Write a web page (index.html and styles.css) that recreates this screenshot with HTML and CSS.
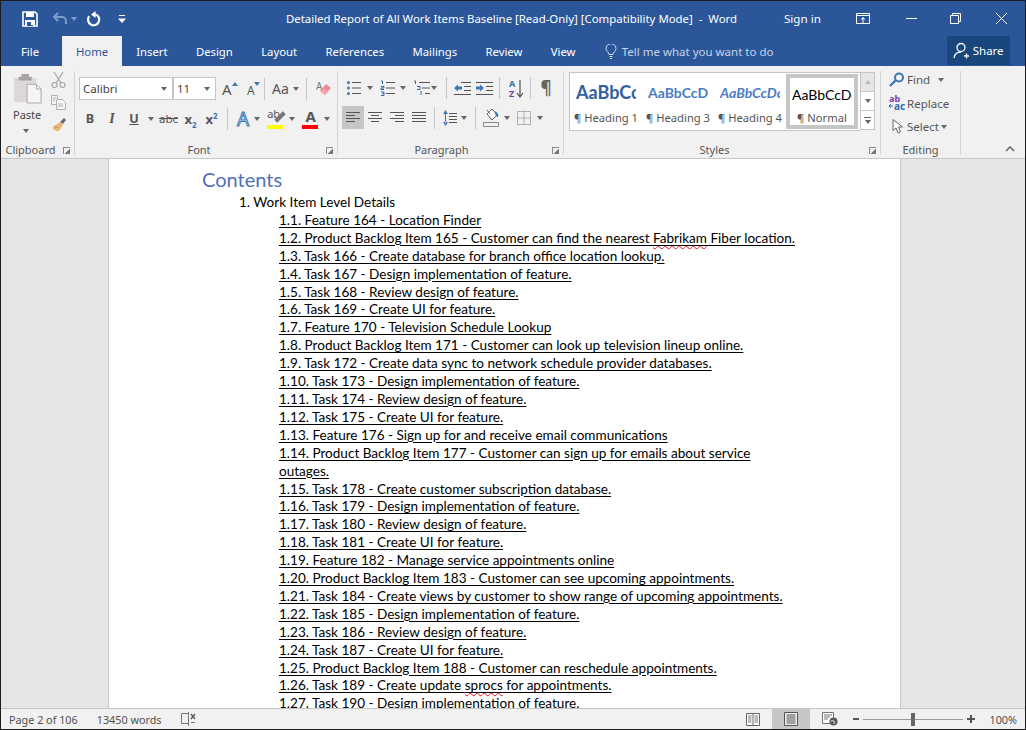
FILE: index.html
```html
<!DOCTYPE html>
<html lang="en">
<head>
    <meta charset="UTF-8">
    <title>Detailed Report of All Work Items Baseline [Read-Only] [Compatibility Mode] - Word</title>
    <link rel="stylesheet" href="styles.css">
</head>
<body>
<div class="window">

    <!-- Title bar -->
    <header class="titlebar">
        <div class="qat">
            <svg class="q-save" width="16" height="16" viewBox="0 0 16 16"><path d="M1 1h12l2 2v12H1z" fill="none" stroke="#fff" stroke-width="1.600"/><path d="M4 1h8v5H4zM3 9h10v6H3z" fill="#fff"/><path d="M5 11h6v4H5z" fill="#2b579a"/><path d="M9 11h2v3H9z" fill="#fff"/></svg>
            <svg class="q-undo" width="16" height="14" viewBox="0 0 16 14"><path d="M6 1L2 5l4 4M2 5h8a4 4 0 0 1 4 4v3" fill="none" stroke="#7f9cc6" stroke-width="2"/></svg>
            <span class="caret caret-dim"></span>
            <svg class="q-redo" width="15" height="16" viewBox="0 0 15 16"><path d="M9 3.200a5.600 5.600 0 1 1-5.800 2" fill="none" stroke="#fff" stroke-width="2.200"/><path d="M9.500 0v7L5 3.500z" fill="#fff"/></svg>
            <svg class="q-more" width="8" height="8" viewBox="0 0 8 8"><path d="M1 .5h6" stroke="#fff"/><path d="M0 3.500h8L4 8z" fill="#fff"/></svg>
        </div>
        <div class="doc-title">Detailed Report of All Work Items Baseline [Read-Only] [Compatibility Mode]&nbsp; -&nbsp; Word</div>
        <div class="sign-in">Sign in</div>
        <div class="win-buttons">
            <svg class="w-display" width="14" height="11" viewBox="0 0 14 11"><path d="M.5.500h13v10H.5zM.5 2.500h13" fill="none" stroke="#fff"/><path d="M7 4L4.500 6.500h5zM6.500 6h1v4h-1z" fill="#fff"/></svg>
            <svg class="w-min" width="11" height="11" viewBox="0 0 11 11"><path d="M0 5.500h11" stroke="#fff"/></svg>
            <svg class="w-max" width="11" height="11" viewBox="0 0 11 11"><path d="M.5 2.500h8v8h-8zM2.500 2.500v-2h8v8h-2" fill="none" stroke="#fff"/></svg>
            <svg class="w-close" width="11" height="11" viewBox="0 0 11 11"><path d="M0 0l11 11M11 0L0 11" stroke="#fff"/></svg>
        </div>
    </header>

    <!-- Tabs -->
    <nav class="tabs">
        <span class="tab tab-file">File</span>
        <span class="tab tab-active">Home</span>
        <span class="tab">Insert</span>
        <span class="tab">Design</span>
        <span class="tab">Layout</span>
        <span class="tab">References</span>
        <span class="tab">Mailings</span>
        <span class="tab">Review</span>
        <span class="tab">View</span>
        <span class="tell-me">
            <svg width="12" height="15" viewBox="0 0 12 15"><path d="M4 10.500C4 8 1 7.500 1 4.700a5 5 0 0 1 10 0C11 7.500 8 8 8 10.500zM4.500 12.500h3M5 14.500h2" fill="none" stroke="#d5dfee"/></svg>
            Tell me what you want to do
        </span>
        <span class="share">
            <svg width="17" height="17" viewBox="0 0 17 17"><circle cx="8" cy="5.500" r="4" fill="none" stroke="#fff" stroke-width="1.300"/><path d="M1 16c.5-3.500 3-6 7-6M11 14h5M13.500 11.500v5" fill="none" stroke="#fff" stroke-width="1.300"/></svg>
            Share
        </span>
    </nav>

    <!-- Ribbon -->
    <section class="ribbon">

        <div class="group g-clipboard">
            <div class="group-body clip-body">
                <div class="paste">
                    <svg width="28" height="30" viewBox="0 0 30 32"><path d="M0 4h24v26H0z" fill="#dcd8d8"/><path d="M8 0h8v3h3v4H5V3h3z" fill="#a9a4a4"/><path d="M14 11h10l5 5v15H14z" fill="#f6f4f4" stroke="#a9a4a4"/><path d="M24 11v5h5" fill="none" stroke="#a9a4a4"/></svg>
                    <span class="paste-label">Paste</span>
                    <span class="caret"></span>
                </div>
                <div class="clip-tools">
                    <svg width="15" height="16" viewBox="0 0 15 16"><path d="M3 0l7 11M12 0L5 11" stroke="#a8a8a8" stroke-width="1.200" fill="none"/><circle cx="3.500" cy="13" r="2.500" fill="none" stroke="#a8a8a8" stroke-width="1.200"/><circle cx="11.500" cy="13" r="2.500" fill="none" stroke="#a8a8a8" stroke-width="1.200"/></svg>
                    <svg width="15" height="15" viewBox="0 0 15 15"><path d="M.5.500h6v9h-6z" fill="none" stroke="#b0b0b0"/><path d="M5.500 4.500h6l3 3v7h-9z" fill="#f6f6f6" stroke="#b0b0b0"/><path d="M2 3h3M2 5h2M7 9h5M7 11h5" stroke="#b0b0b0"/></svg>
                    <svg width="16" height="15" viewBox="0 0 16 15"><path d="M9 5l3 3-4 6H5L1 11z" fill="#eab676"/><path d="M9 5l4-4 2 2-3 4z" fill="#6a6a6a"/><path d="M3 9l4 2" stroke="#c08c4c"/></svg>
                </div>
            </div>
            <div class="group-label">Clipboard<i class="launcher"></i></div>
        </div>

        <div class="group g-font">
            <div class="group-body">
                <div class="row font-row1">
                    <span class="combo combo-font">Calibri<span class="caret"></span></span>
                    <span class="combo combo-size">11<span class="caret"></span></span>
                    <span class="t-glyph t-grow">A<i class="mini-up"></i></span>
                    <span class="t-glyph t-shrink">A<i class="mini-down"></i></span>
                    <i class="sep"></i>
                    <span class="t-glyph t-case">Aa<span class="caret"></span></span>
                    <i class="sep"></i>
                    <svg class="t-clear" width="16" height="16" viewBox="0 0 16 16"><path d="M10 3l5 4-6 7-5-4z" fill="#ec8b98"/><path d="M4 10l3-3 5 4-3 3z" fill="#f3a6b0"/><text x="0" y="9" font-size="10" font-family="Noto Sans" fill="#777">A</text></svg>
                </div>
                <div class="row font-row2">
                    <span class="t-text t-b">B</span>
                    <span class="t-text t-i">I</span>
                    <span class="t-text t-u">U</span>
                    <span class="caret c-u"></span>
                    <span class="t-text t-abc">abc</span>
                    <span class="t-text t-x">x<sub>2</sub></span>
                    <span class="t-text t-x">x<sup>2</sup></span>
                    <i class="sep sep-font"></i>
                    <span class="t-effect">A</span>
                    <span class="caret c-e"></span>
                    <span class="t-mark"><span class="mark-text">ab</span><i class="mark-pen"></i><i class="swatch sw-yellow"></i></span>
                    <span class="caret c-e"></span>
                    <span class="t-color">A<i class="swatch sw-red"></i></span>
                    <span class="caret c-e"></span>
                </div>
            </div>
            <div class="group-label">Font<i class="launcher"></i></div>
        </div>

        <div class="group g-para">
            <div class="group-body">
                <div class="row para-row1">
                    <svg class="p-bul" width="14" height="16" viewBox="0 0 14 16"><path d="M5 2.500h9M5 8h9M5 13.500h9" stroke="#555"/><circle cx="1.500" cy="2.500" r="1.500" fill="#3f78b8"/><circle cx="1.500" cy="8" r="1.500" fill="#3f78b8"/><circle cx="1.500" cy="13.500" r="1.500" fill="#3f78b8"/></svg>
                    <span class="caret c-p"></span>
                    <svg class="p-num" width="15" height="16" viewBox="0 0 15 16"><path d="M6 2.500h9M6 8h9M6 13.500h9" stroke="#555"/><path d="M1 1h1.500v3M1 6.500h3v1.500H1v1.500h3M1 12h3v3.500H1M2 13.700h2" stroke="#2e6db0" fill="none"/></svg>
                    <span class="caret c-p"></span>
                    <svg class="p-multi" width="17" height="16" viewBox="0 0 17 16"><path d="M6 2.500h11M9 8h8M12 13.500h5" stroke="#555"/><path d="M1 1h1.500v3M4 6.500h3v3H4M8 11v4" stroke="#2e6db0" fill="none"/></svg>
                    <span class="caret c-m"></span>
                    <i class="sep sep-p1"></i>
                    <svg class="p-ind" width="17" height="14" viewBox="0 0 17 14"><path d="M7 1.500h10M10 5.500h7M10 9.500h7M0 13.500h17" stroke="#555"/><path d="M0 7l4-3.500v2h4v3H4v2z" fill="#3f78b8"/></svg>
                    <svg class="p-ind" width="17" height="14" viewBox="0 0 17 14"><path d="M0 1.500h17M10 5.500h7M10 9.500h7M0 13.500h17" stroke="#555"/><path d="M8 7L4 3.500v2H0v3h4v2z" fill="#3f78b8"/></svg>
                    <i class="sep sep-p2"></i>
                    <svg class="p-sort" width="14" height="19" viewBox="0 0 14 19"><text x="0" y="8" font-size="9" font-weight="700" font-family="Noto Sans" fill="#2e6db0">A</text><text x="0" y="18" font-size="9" font-weight="700" font-family="Noto Sans" fill="#7a3fa8">Z</text><path d="M11 1v16M8 14l3 4 3-4" fill="none" stroke="#555" stroke-width="1.200"/></svg>
                    <i class="sep sep-p3"></i>
                    <span class="p-pilcrow">¶</span>
                </div>
                <div class="row para-row2">
                    <span class="align align-on"><svg width="14" height="11" viewBox="0 0 14 11"><path d="M0 .5h14M0 3.500h9M0 6.500h14M0 9.500h9" stroke="#555"/></svg></span>
                    <span class="align"><svg width="14" height="11" viewBox="0 0 14 11"><path d="M0 .5h14M3 3.500h8M0 6.500h14M3 9.500h8" stroke="#555"/></svg></span>
                    <span class="align"><svg width="14" height="11" viewBox="0 0 14 11"><path d="M0 .5h14M5 3.500h9M0 6.500h14M5 9.500h9" stroke="#555"/></svg></span>
                    <span class="align"><svg width="14" height="11" viewBox="0 0 14 11"><path d="M0 .5h14M0 3.500h14M0 6.500h14M0 9.500h14" stroke="#555"/></svg></span>
                    <i class="sep sep-p4"></i>
                    <svg class="p-space" width="14" height="16" viewBox="0 0 14 16"><path d="M6 3.500h8M6 6.500h8M6 9.500h8M6 12.500h8" stroke="#555"/><path d="M0 4l2.500-4L5 4zM0 12l2.500 4L5 12zM2 3h1v10H2z" fill="#3f78b8"/></svg>
                    <span class="caret c-s"></span>
                    <i class="sep sep-p5"></i>
                    <svg class="p-shade" width="16" height="18" viewBox="0 0 16 18"><path d="M4 5l5-5 5 6-5 5z" fill="#fff" stroke="#666"/><path d="M4 1l3 4" stroke="#666"/><path d="M12 2c3 2 4 4 3 6-2 0-3-2-3-6z" fill="#3f78b8"/><path d="M.5 13.500h15v4H.5z" fill="#f1f1f1" stroke="#888"/></svg>
                    <span class="caret c-b"></span>
                    <svg class="p-border" width="14" height="14" viewBox="0 0 14 14"><path d="M.5.500h13v13H.5zM7 .5v13M.5 7h13" fill="none" stroke="#777" stroke-dasharray="1 1"/></svg>
                    <span class="caret c-b2"></span>
                </div>
            </div>
            <div class="group-label">Paragraph<i class="launcher"></i></div>
        </div>

        <div class="group g-styles">
            <div class="group-body gallery-wrap">
                <div class="gallery">
                    <div class="style-item"><span class="s-sample s-h1">AaBbCc</span><span class="s-name">¶ Heading 1</span></div>
                    <div class="style-item"><span class="s-sample s-h3">AaBbCcDc</span><span class="s-name">¶ Heading 3</span></div>
                    <div class="style-item"><span class="s-sample s-h4">AaBbCcDc</span><span class="s-name">¶ Heading 4</span></div>
                    <div class="style-item style-on"><span class="s-sample s-normal">AaBbCcDc</span><span class="s-name">¶ Normal</span></div>
                </div>
                <div class="gallery-scroll">
                    <span class="g-btn g-btn-off"><i class="up"></i></span>
                    <span class="g-btn"><i class="caret"></i></span>
                    <span class="g-btn g-btn-more"><i class="caret"></i></span>
                </div>
            </div>
            <div class="group-label">Styles<i class="launcher"></i></div>
        </div>

        <div class="group g-edit">
            <div class="group-body edit-body">
                <div class="edit-row">
                    <svg width="16" height="15" viewBox="0 0 16 15"><circle cx="10" cy="5.500" r="4" fill="none" stroke="#3f78b8" stroke-width="2"/><path d="M7 8l-6 6" stroke="#3f78b8" stroke-width="2.400"/></svg>
                    Find<span class="caret c-find"></span>
                </div>
                <div class="edit-row">
                    <svg class="abac" width="17" height="16" viewBox="0 0 17 16"><text x="0" y="7" font-size="9" font-weight="700" font-family="Noto Sans" fill="#7a3fa8">ab</text><text x="5" y="15" font-size="10" font-weight="700" font-family="Noto Sans" fill="#2e6db0">ac</text><path d="M0 11h4M2 9l-2 2 2 2" fill="none" stroke="#2e6db0"/></svg>
                    Replace
                </div>
                <div class="edit-row edit-select">
                    <svg width="12" height="15" viewBox="0 0 12 15"><path d="M1 .5v11l3-2.500 2 5 2.500-1-2-5h4z" fill="#fff" stroke="#666"/></svg>
                    Select<span class="caret"></span>
                </div>
            </div>
            <div class="group-label group-label-plain">Editing</div>
        </div>

        <div class="collapse"><svg width="10" height="6" viewBox="0 0 10 6"><path d="M1 5l4-4 4 4" fill="none" stroke="#666" stroke-width="1.500"/></svg></div>
    </section>

    <!-- Document -->
    <main class="workspace">
        <div class="page">
            <h1 class="contents-title">Contents</h1>
            <p class="lvl1">1. Work Item Level Details</p>
            <ul class="toc">
                <li><u>1.1. Feature 164 - Location Finder</u></li>
                <li><u>1.2. Product Backlog Item 165 - Customer can find the nearest <span class="spell">Fabrikam</span> Fiber location.</u></li>
                <li><u>1.3. Task 166 - Create database for branch office location lookup.</u></li>
                <li><u>1.4. Task 167 - Design implementation of feature.</u></li>
                <li><u>1.5. Task 168 - Review design of feature.</u></li>
                <li><u>1.6. Task 169 - Create UI for feature.</u></li>
                <li><u>1.7. Feature 170 - Television Schedule Lookup</u></li>
                <li><u>1.8. Product Backlog Item 171 - Customer can look up television lineup online.</u></li>
                <li><u>1.9. Task 172 - Create data sync to network schedule provider databases.</u></li>
                <li><u>1.10. Task 173 - Design implementation of feature.</u></li>
                <li><u>1.11. Task 174 - Review design of feature.</u></li>
                <li><u>1.12. Task 175 - Create UI for feature.</u></li>
                <li><u>1.13. Feature 176 - Sign up for and receive email communications</u></li>
                <li><u>1.14. Product Backlog Item 177 - Customer can sign up for emails about service outages.</u></li>
                <li><u>1.15. Task 178 - Create customer subscription database.</u></li>
                <li><u>1.16. Task 179 - Design implementation of feature.</u></li>
                <li><u>1.17. Task 180 - Review design of feature.</u></li>
                <li><u>1.18. Task 181 - Create UI for feature.</u></li>
                <li><u>1.19. Feature 182 - Manage service appointments online</u></li>
                <li><u>1.20. Product Backlog Item 183 - Customer can see upcoming appointments.</u></li>
                <li><u>1.21. Task 184 - Create views by customer to show range of upcoming appointments.</u></li>
                <li><u>1.22. Task 185 - Design implementation of feature.</u></li>
                <li><u>1.23. Task 186 - Review design of feature.</u></li>
                <li><u>1.24. Task 187 - Create UI for feature.</u></li>
                <li><u>1.25. Product Backlog Item 188 - Customer can reschedule appointments.</u></li>
                <li><u>1.26. Task 189 - Create update <span class="spell">sprocs</span> for appointments.</u></li>
                <li><u>1.27. Task 190 - Design implementation of feature.</u></li>
            </ul>
        </div>
    </main>

    <!-- Status bar -->
    <footer class="statusbar">
        <span class="st-page">Page 2 of 106</span>
        <span class="st-words">13450 words</span>
        <svg class="st-proof" width="15" height="14" viewBox="0 0 15 14"><path d="M7.500 1.500h-7v10h7M7.500 0v14" fill="none" stroke="#777"/><path d="M10 2l4 5M14 2l-4 5" stroke="#555" stroke-width="1.300"/><path d="M10 10.500h4" stroke="#777"/></svg>
        <span class="st-spacer"></span>
        <svg class="st-read" width="14" height="13" viewBox="0 0 14 13"><path d="M.5.500h13v12H.5zM7 .5v12" fill="#fff" stroke="#666"/><path d="M2 3h3.500M2 5h3.500M2 7h3.500M2 9h3.500M8.500 3H12M8.500 5H12M8.500 7H12M8.500 9H12" stroke="#777"/></svg>
        <span class="st-print"><svg width="14" height="14" viewBox="0 0 14 14"><path d="M.5.500h13v13H.5z" fill="#eee" stroke="#555"/><path d="M2.500 3h9M2.500 5h9M2.500 7h9M2.500 9h9M2.500 11h9" stroke="#555"/></svg></span>
        <svg class="st-web" width="16" height="14" viewBox="0 0 16 14"><path d="M.5.500h11v11H.5z" fill="#fff" stroke="#777"/><path d="M2 3h8M2 5h6M2 7h4" stroke="#777"/><circle cx="11.500" cy="9.500" r="4" fill="#5a5a5a"/><path d="M9 9h3v3" stroke="#fff"/></svg>
        <i class="zoom-minus"></i>
        <span class="slider"><i class="thumb"></i></span>
        <i class="zoom-plus"></i>
        <span class="st-zoom">100%</span>
    </footer>
</div>
</body>
</html>
```

FILE: styles.css
```css
* {
    box-sizing: border-box;
}

html, body {
    margin: 0;
    padding: 0;
    height: 100%;
    overflow: hidden;
}

body {
    font-family: "Noto Sans", "Open Sans", sans-serif;
    font-size: 11.5px;
    color: #444;
}

i {
    display: block;
}

.window {
    width: 1026px;
    height: 730px;
    display: flex;
    flex-direction: column;
    border: 1px solid #1c1c1c;
    background: #f1f1f1;
    overflow: hidden;
}

.caret {
    display: inline-block;
    width: 0;
    height: 0;
    border-left: 3.5px solid transparent;
    border-right: 3.5px solid transparent;
    border-top: 4px solid #666;
    flex: none;
}

/* title bar */
.titlebar {
    height: 35px;
    flex: none;
    display: flex;
    align-items: center;
    background: #2b579a;
    color: #fff;
    position: relative;
}

.qat {
    display: flex;
    align-items: center;
    padding-left: 21px;
}

.q-undo {
    margin-left: 14px;
}

.caret-dim {
    border-top-color: #7f9cc6;
    margin-left: 3px;
}

.q-redo {
    margin-left: 9px;
}

.q-more {
    margin-left: 17px;
}

.doc-title {
    margin-left: 160px;
    width: 454px;
    white-space: nowrap;
    font-size: 11.4px;
}

.sign-in {
    margin-left: 44px;
    font-size: 11.6px;
}

.win-buttons {
    display: flex;
    align-items: center;
    margin-left: 35px;
}

.w-min {
    margin-left: 36px;
}

.w-max {
    margin-left: 33px;
}

.w-close {
    margin-left: 35px;
}

/* tabs */
.tabs {
    height: 30px;
    flex: none;
    display: flex;
    align-items: center;
    background: #2b579a;
    color: #fff;
}

.tab {
    height: 30px;
    padding: 0 14.2px;
    display: flex;
    align-items: center;
    white-space: nowrap;
    font-size: 11.3px;
}

.tab-file {
    width: 61px;
    justify-content: center;
    padding: 0 3px 0 0;
}

.tab-active {
    width: 60px;
    padding: 0;
    justify-content: center;
    background: #f1f1f1;
    color: #2b579a;
}

.tell-me {
    margin-left: 15px;
    display: flex;
    align-items: center;
    gap: 5px;
    color: #c5d3e8;
    white-space: nowrap;
    width: 342px;
}

.share {
    width: 63px;
    height: 29px;
    margin-bottom: 1px;
    display: flex;
    align-items: center;
    justify-content: center;
    gap: 3px;
    background: #19467d;
}

/* ribbon */
.ribbon {
    height: 93px;
    flex: none;
    display: flex;
    padding-top: 5px;
    border-bottom: 1px solid #c6c6c6;
    background: #f1f1f1;
    position: relative;
}

.group {
    height: 84px;
    display: flex;
    flex-direction: column;
    border-right: 1px solid #d4d4d4;
}

.group-body {
    flex: 1;
    min-height: 0;
}

.group-label {
    height: 15px;
    line-height: 20px;
    padding-right: 14px;
    font-size: 11px;
    text-align: center;
    color: #555;
    position: relative;
    white-space: nowrap;
}

.group-label-plain {
    padding-right: 0;
}

.g-font .group-label {
    margin-left: -4px;
}

.g-para .group-label {
    padding-right: 18px;
}

.g-styles .group-label {
    margin-left: -5px;
    padding-right: 15px;
}

.launcher {
    position: absolute;
    right: 4px;
    top: 7px;
    width: 7px;
    height: 7px;
    border-left: 1px solid #888;
    border-top: 1px solid #888;
    background: linear-gradient(135deg, transparent 55%, #777 55%);
}

.row {
    display: flex;
    align-items: center;
}

.sep {
    width: 1px;
    height: 22px;
    background: #c6c6c6;
    flex: none;
}

/* clipboard */
.g-clipboard {
    width: 74px;
}

.clip-body {
    display: flex;
}

.paste {
    width: 50px;
    padding: 3px 0 0 13px;
    display: flex;
    flex-direction: column;
    align-items: flex-start;
}

.paste-label {
    line-height: 14px;
    margin: 4px 0 7px -1px;
    font-size: 11px;
}

.paste .caret {
    margin-left: 9px;
}

.clip-tools {
    display: flex;
    flex-direction: column;
    gap: 7px;
    padding-top: 1px;
}

/* font */
.g-font {
    width: 263px;
    padding-left: 4px;
}

.font-row1 {
    height: 23px;
    margin-top: 6px;
}

.combo {
    height: 23px;
    display: flex;
    align-items: center;
    justify-content: space-between;
    padding: 0 5px 0 3px;
    background: #fff;
    border: 1px solid #c6c6c6;
    color: #444;
}

.combo-font {
    width: 94px;
}

.combo-size {
    width: 43px;
}

.t-glyph {
    position: relative;
    font-size: 15px;
    color: #555;
    display: flex;
    align-items: center;
}

.t-grow {
    margin-left: 6px;
    width: 15px;
}

.t-shrink {
    margin-left: 10px;
    margin-right: 5px;
    width: 12px;
    font-size: 12px;
    padding-top: 3px;
}

.mini-up,
.mini-down {
    position: absolute;
    right: -1px;
    top: 3px;
    width: 0;
    height: 0;
    border-left: 3px solid transparent;
    border-right: 3px solid transparent;
}

.mini-up {
    border-bottom: 4px solid #3f78b8;
}

.mini-down {
    border-top: 4px solid #3f78b8;
}

.t-case {
    margin-left: 7px;
    width: 34px;
    gap: 4px;
    font-size: 14px;
}

.t-clear {
    margin-left: 9px;
}

.font-row2 {
    height: 31px;
    margin-top: 3px;
}

.t-text {
    width: 22px;
    text-align: center;
    color: #555;
    font-size: 12.5px;
    font-weight: 700;
    flex: none;
}

.t-i {
    font-style: italic;
    font-family: "Liberation Serif", serif;
    font-size: 14px;
}

.t-u {
    text-decoration: underline;
}

.c-u {
    margin: 0 3px;
}

.t-abc {
    font-weight: 400;
    font-size: 11.5px;
    text-decoration: line-through;
    width: 23px;
}

.t-x {
    width: 21px;
    font-size: 13px;
}

.t-x sub,
.t-x sup {
    font-size: 8px;
    line-height: 0;
    color: #3f78b8;
}

.sep-font {
    margin-left: 5px;
}

.t-effect {
    margin-left: 9px;
    width: 16px;
    font-size: 19px;
    line-height: 20px;
    font-weight: 400;
    color: #dbe8f6;
    -webkit-text-stroke: 1px #3f78b8;
}

.c-e {
    margin: 0 7px 0 5px;
}

.t-mark,
.t-color {
    position: relative;
    width: 17px;
    height: 22px;
    color: #555;
    text-align: center;
    flex: none;
    line-height: 17px;
}

.t-color {
    font-size: 15px;
    font-weight: 700;
}

.mark-text {
    position: absolute;
    left: 0;
    top: 0;
    font-size: 11px;
    line-height: 12px;
}

.mark-pen {
    position: absolute;
    left: 7px;
    top: 7px;
    width: 12px;
    height: 4px;
    background: #777;
    transform: rotate(-45deg);
}

.swatch {
    position: absolute;
    left: 0;
    bottom: 1px;
    width: 16px;
    height: 4px;
}

.sw-yellow {
    background: #ffff00;
}

.sw-red {
    background: #ff0000;
}

/* paragraph */
.g-para {
    width: 226px;
}

.para-row1 {
    height: 24px;
    margin-top: 5px;
    padding-left: 9px;
}

.c-p {
    margin: 0 7px 0 5.5px;
}

.c-m {
    margin-left: 1px;
}

.sep-p1 {
    margin-left: 8.5px;
}

.p-ind {
    margin-left: 7px;
}

.p-ind + .p-ind {
    margin-left: 5px;
}

.sep-p2 {
    margin-left: 6px;
}

.p-sort {
    margin-left: 9px;
}

.sep-p3 {
    margin-left: 7px;
}

.p-pilcrow {
    margin-left: 10px;
    font-size: 17px;
    line-height: 20px;
    color: #666;
    font-weight: 700;
}

.para-row2 {
    height: 23px;
    margin-top: 6px;
    padding-left: 4px;
}

.align {
    width: 22px;
    height: 23px;
    display: flex;
    align-items: center;
    justify-content: center;
    flex: none;
}

.align-on {
    background: #c6c6c6;
}

.sep-p4 {
    margin-left: 4px;
}

.p-space {
    margin-left: 8px;
}

.c-s {
    margin-left: 3.5px;
}

.sep-p5 {
    margin-left: 8.5px;
}

.p-shade {
    margin-left: 7px;
}

.c-b {
    margin: 0 7.5px 0 4.5px;
}

.c-b2 {
    margin-left: 5.5px;
}

/* styles */
.g-styles {
    width: 317px;
    padding: 0 0 0 5px;
}

.gallery-wrap {
    display: flex;
    padding-top: 1px;
}

.gallery {
    width: 291px;
    height: 59px;
    padding: 1px 0;
    display: flex;
    background: #fff;
    border: 1px solid #c6c6c6;
    border-right: 0;
}

.style-item {
    width: 72px;
    display: flex;
    flex-direction: column;
    align-items: center;
    overflow: hidden;
    color: #555;
}

.s-sample {
    height: 36px;
    display: flex;
    align-items: center;
    width: 60px;
    overflow: hidden;
    white-space: nowrap;
    flex: none;
}

.s-name {
    font-size: 11.2px;
    line-height: 14px;
    white-space: nowrap;
    margin-top: 1px;
}

.s-h1 {
    font-family: "Lato", sans-serif;
    font-size: 18px;
    font-weight: 700;
    color: #34609f;
}

.s-h3 {
    font-family: "Lato", sans-serif;
    font-size: 14px;
    font-weight: 700;
    color: #4a7cc4;
}

.s-h4 {
    font-family: "Lato", sans-serif;
    font-size: 14px;
    font-weight: 700;
    font-style: italic;
    color: #4a7cc4;
}

.style-on {
    width: 72px;
    border: 4px solid #c6c6c6;
}

.s-normal {
    font-family: "Lato", sans-serif;
    font-size: 14px;
    height: 32px;
    color: #000;
    width: 60px;
    padding-top: 1px;
}

.gallery-scroll {
    width: 15px;
    height: 59px;
    display: flex;
    flex-direction: column;
}

.g-btn {
    height: 20px;
    background: #fff;
    border: 1px solid #c6c6c6;
    display: flex;
    align-items: center;
    justify-content: center;
    margin-top: -1px;
}

.g-btn:first-child {
    margin-top: 0;
}

.g-btn-off {
    background: #e6e6e6;
}

.up {
    width: 0;
    height: 0;
    border-left: 3.5px solid transparent;
    border-right: 3.5px solid transparent;
    border-bottom: 4px solid #bbb;
}

.g-btn-more {
    flex-direction: column;
    gap: 2px;
}

.g-btn-more::before {
    content: "";
    width: 7px;
    height: 1px;
    background: #666;
}

/* editing */
.g-edit {
    width: 80px;
}

.edit-body {
    padding: 0 0 0 8px;
    margin-top: -3px;
}

.edit-row {
    height: 23.5px;
    display: flex;
    align-items: center;
    gap: 2px;
    white-space: nowrap;
    color: #555;
}

.abac {
    margin-right: -1px;
}

.c-find {
    margin-left: 6px;
}

.edit-select {
    padding-left: 3px;
    gap: 3px;
}

.edit-select .caret {
    margin-left: -1px;
}

.collapse {
    position: absolute;
    right: 10px;
    bottom: 6px;
    display: flex;
}

/* document area */
.workspace {
    flex: 1;
    min-height: 0;
    background: #e6e6e6;
    padding-left: 107px;
    overflow: hidden;
}

.page {
    width: 793px;
    height: 100%;
    background: #fff;
    border-left: 1px solid #c6c6c6;
    border-right: 1px solid #c6c6c6;
    padding: 8px 0 0 93px;
    font-family: "Lato", sans-serif;
    font-size: 13.56px;
    line-height: 17.9px;
    color: #000;
    overflow: hidden;
}

.contents-title {
    margin: 0 0 3px;
    font-size: 20px;
    line-height: 24px;
    font-weight: 400;
    color: #4f71b8;
}

.lvl1 {
    margin: 0 0 0 37px;
}

.toc {
    margin: 0 0 0 77px;
    padding: 0;
    width: 522px;
    list-style: none;
}

.toc u {
    text-decoration: underline;
    text-underline-offset: 2px;
}

.spell {
    text-decoration: underline wavy #e81123 1px;
    text-underline-offset: 2px;
}

/* status bar */
.statusbar {
    height: 21px;
    flex: none;
    display: flex;
    align-items: center;
    background: #f1f1f1;
    border-top: 1px solid #c6c6c6;
    font-size: 10.8px;
    color: #505050;
}

.st-page {
    margin-left: 8px;
}

.st-words {
    margin-left: 19px;
}

.st-proof {
    margin-left: 20px;
}

.st-spacer {
    flex: 1;
}

.st-print {
    width: 38px;
    height: 20px;
    margin-left: 12px;
    display: flex;
    align-items: center;
    justify-content: center;
    background: #c6c6c6;
}

.st-web {
    margin-left: 12px;
}

.zoom-minus,
.zoom-plus {
    width: 8px;
    height: 2px;
    background: #555;
    position: relative;
    flex: none;
}

.zoom-minus {
    width: 6px;
    margin-left: 15px;
}

.zoom-plus::after {
    content: "";
    position: absolute;
    left: 3px;
    top: -3px;
    width: 2px;
    height: 8px;
    background: #555;
}

.slider {
    width: 100px;
    height: 1px;
    margin: 0 4px;
    background: #999;
    position: relative;
    flex: none;
}

.thumb {
    position: absolute;
    left: 48px;
    top: -6px;
    width: 4px;
    height: 13px;
    background: #666;
}

.st-zoom {
    margin-left: 15px;
    margin-right: 8px;
}
```
